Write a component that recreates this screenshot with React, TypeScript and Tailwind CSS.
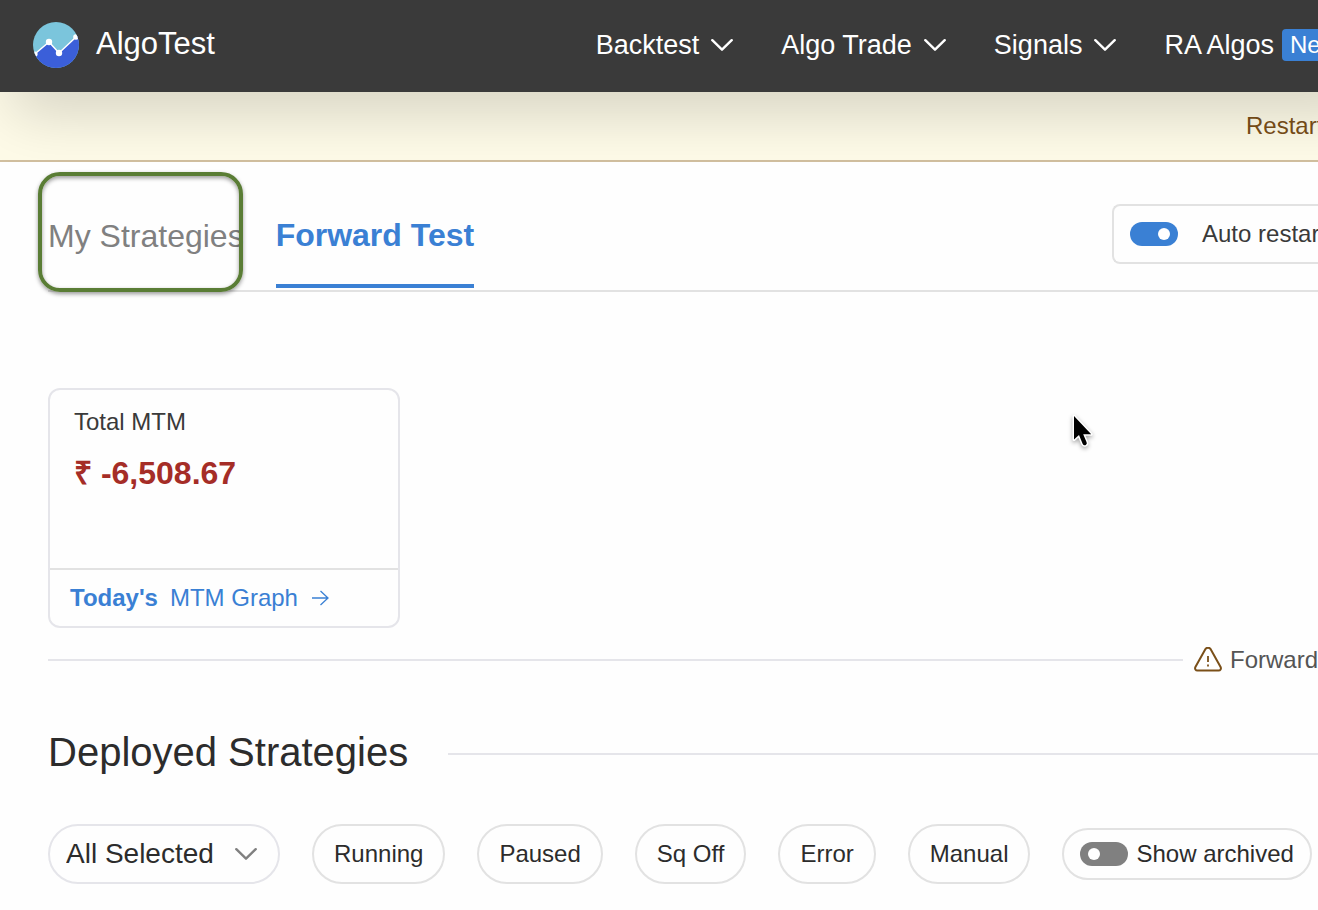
import React from "react";

interface ToggleProps {
  id: string;
  defaultChecked?: boolean;
}

const Logo = () => (
  <svg width="46" height="46" viewBox="0 0 46 46" aria-hidden="true">
    <clipPath id="logo-clip">
      <circle cx="23" cy="23" r="23" />
    </clipPath>
    <g clipPath="url(#logo-clip)">
      <rect width="46" height="46" fill="#7bc5dc" />
      <path d="M0 34 L3 31 L16 20 L26 31 L43 15 L46 12 V46 H0 Z" fill="#3b5fd9" />
      <path d="M3 31 L16 20 L26 31 L43 15" fill="none" stroke="#fff" strokeWidth="1.5" />
      <circle cx="2" cy="32" r="2.6" fill="#fff" />
      <circle cx="16" cy="20" r="3.2" fill="#fff" />
      <circle cx="26" cy="31" r="3.2" fill="#fff" />
      <circle cx="43" cy="15" r="2.8" fill="#fff" />
    </g>
  </svg>
);

const Chevron: React.FC<{ className?: string }> = ({ className }) => (
  <svg
    width="22"
    height="12"
    viewBox="0 0 22 12"
    fill="none"
    stroke="currentColor"
    strokeWidth="2.4"
    strokeLinecap="round"
    strokeLinejoin="round"
    className={className}
    aria-hidden="true"
  >
    <path d="M1.3 1.2 L11 10.7 L20.7 1.2" />
  </svg>
);

const WarningIcon = () => (
  <svg
    width="28"
    height="26"
    viewBox="0 0 28 26"
    fill="none"
    stroke="#7a4f18"
    strokeWidth="2"
    strokeLinecap="round"
    strokeLinejoin="round"
    className="shrink-0"
    aria-hidden="true"
  >
    <path d="M11.6 1.8 C12.7 0.4 15.3 0.4 16.4 1.8 L26.6 20 C27.5 21.8 26.4 23.6 24.5 23.6 H3.5 C1.6 23.6 0.5 21.8 1.4 20 Z" />
    <path d="M14 9 V15" strokeWidth="1.8" strokeLinecap="butt" />
    <path d="M14 17.5 V19.5" strokeWidth="1.8" strokeLinecap="butt" />
  </svg>
);

const Toggle: React.FC<ToggleProps> = ({ id, defaultChecked }) => (
  <input
    id={id}
    type="checkbox"
    role="switch"
    defaultChecked={defaultChecked}
    className="h-6 w-12 shrink-0 cursor-pointer appearance-none rounded-full bg-[#808080] px-2 py-1.5 before:block before:size-3 before:rounded-full before:bg-white checked:bg-[#3a80d4] checked:before:ml-5"
  />
);

const menus = ["Backtest", "Algo Trade", "Signals"];
const filters = ["Running", "Paused", "Sq Off", "Error", "Manual"];

const Header = () => (
  <header className="relative z-10 -mr-16 flex h-[92px] items-center justify-between bg-[#3a3a3a] pr-16 pb-0.5 pl-[33px] text-white shadow-[0_32px_60px_-12px_rgba(0,0,0,0.17)]">
    <a href="#home" className="flex items-center gap-[17px]">
      <Logo />
      <span className="pb-0.5 text-[31px] leading-10">AlgoTest</span>
    </a>
    <nav className="flex items-center gap-12 text-[27px] leading-8">
      {menus.map((menu) => (
        <button key={menu} type="button" className="flex items-center gap-3">
          {menu}
          <Chevron />
        </button>
      ))}
      <a href="#ra-algos" className="flex items-center gap-2">
        RA Algos
        {/* Badge runs off the right edge of the bar */}
        <span className="h-8 w-9 overflow-hidden rounded-l bg-[#3a80d4] pl-2 text-2xl leading-8">
          New
        </span>
      </a>
    </nav>
  </header>
);

const Tabs = () => (
  <div className="ml-12 flex h-[130px] justify-between border-b-2 border-[#e2e2e2]">
    <div className="flex gap-8">
      <a href="#my-strategies" className="relative flex items-center pt-5 text-[32px] leading-10 text-[#808080]">
        My Strategies
        <span className="pointer-events-none absolute -left-[10px] top-[10px] h-[120px] w-[205px] rounded-[22px] border-4 border-[#5a7d35] shadow-[0_2px_4px_rgba(0,0,0,0.4),inset_0_2px_4px_rgba(0,0,0,0.4)]" />
      </a>
      <a
        href="#forward-test"
        className="mb-0.5 flex items-center border-b-4 border-[#3a80d4] pt-6 text-[32px] leading-10 font-bold text-[#3a80d4]"
      >
        Forward Test
      </a>
    </div>
    <div className="mt-[42px] flex h-[60px] w-[206px] items-center gap-6 rounded-l-lg border-2 border-r-0 border-[#e2e2e2] pl-4">
      <Toggle id="auto-restart" defaultChecked />
      <label htmlFor="auto-restart" className="text-2xl whitespace-nowrap text-[#3a3a3a]">
        Auto restart
      </label>
    </div>
  </div>
);

const MtmCard = () => (
  <section className="mt-24 ml-12 flex h-60 w-[352px] flex-col rounded-xl border-2 border-[#e5e5ea]">
    <div className="flex-1 px-6 pt-4">
      <h2 className="text-2xl leading-8 text-[#3a3a3a]">Total MTM</h2>
      <p className="mt-[15px] text-[32px] leading-10 font-bold text-[#a52d27]">₹ -6,508.67</p>
    </div>
    <a
      href="#mtm-graph"
      className="flex h-[58px] items-center gap-3 border-t-2 border-[#e2e2e2] px-5 text-2xl text-[#3a80d4]"
    >
      <span className="font-bold">Today's</span>
      <span>MTM Graph</span>
      <svg
        width="20"
        height="16"
        viewBox="0 0 20 16"
        fill="none"
        stroke="currentColor"
        strokeWidth="1.3"
        aria-hidden="true"
      >
        <path d="M2 8 H18 M10.5 1 L18 8 L10.5 15" />
      </svg>
    </a>
  </section>
);

const Filters = () => (
  <div className="mt-12 ml-12 flex items-center gap-8 text-2xl text-[#2c2c2c]">
    <div className="relative w-[232px] shrink-0">
      <select
        aria-label="Strategies"
        className="block h-[60px] w-full appearance-none rounded-full border-2 border-[#e5e5ea] bg-transparent pl-4 text-[28px] leading-10"
      >
        <option>All Selected</option>
      </select>
      <Chevron className="pointer-events-none absolute top-6 right-[23px] text-[#808080]" />
    </div>
    {filters.map((filter) => (
      <button
        key={filter}
        type="button"
        className="h-[60px] shrink-0 rounded-full border-2 border-[#e2e2e2] px-5"
      >
        {filter}
      </button>
    ))}
    <div className="flex h-[52px] shrink-0 items-center gap-2 rounded-full border-2 border-[#e2e2e2] px-4">
      <Toggle id="show-archived" />
      <label htmlFor="show-archived" className="whitespace-nowrap">
        Show archived
      </label>
    </div>
  </div>
);

export default function App() {
  return (
    <div className="relative min-h-screen overflow-hidden bg-[#fefefe] font-['Liberation_Sans',Arial,sans-serif]">
      <Header />
      <div className="flex h-[70px] items-center justify-end border-b-2 border-[#d1bf9f] bg-[#fefbe8] text-2xl text-[#7a4f18]">
        <span className="w-18 whitespace-nowrap">Restart</span>
      </div>
      {/* Sits above the header's shadow, so that it only falls on the notice bar */}
      <main className="relative z-20 bg-[#fefefe]">
        <Tabs />
        <MtmCard />
        <div className="mt-4 ml-12 flex h-8 items-center">
          <hr className="flex-1 border-t-2 border-[#e5e5ea]" />
          <div className="ml-[11px] flex w-[124px] items-center gap-2 text-2xl text-[#555]">
            <WarningIcon />
            <span className="whitespace-nowrap">Forward</span>
          </div>
        </div>
        <div className="mt-13 ml-12 flex h-12 items-center gap-10">
          <h1 className="text-[40px] leading-12 text-[#2c2c2c]">Deployed Strategies</h1>
          <hr className="mt-1 flex-1 border-t-2 border-[#e5e5ea]" />
        </div>
        <Filters />
      </main>
      {/* Mouse pointer */}
      <svg
        width="28"
        height="40"
        viewBox="0 0 28 40"
        className="pointer-events-none absolute top-[412px] left-[1070px] z-30 drop-shadow-[0_2px_2px_rgba(0,0,0,0.35)]"
        aria-hidden="true"
      >
        <path
          d="M4 4 V27.6 L9 23 L12.6 31.8 Q13.8 34 15.8 33 Q17.4 32 16.6 30.2 L13.2 22.3 H21.2 Z"
          fill="#000"
          stroke="#fff"
          strokeWidth="3"
          strokeLinejoin="round"
          paintOrder="stroke"
        />
      </svg>
    </div>
  );
}
